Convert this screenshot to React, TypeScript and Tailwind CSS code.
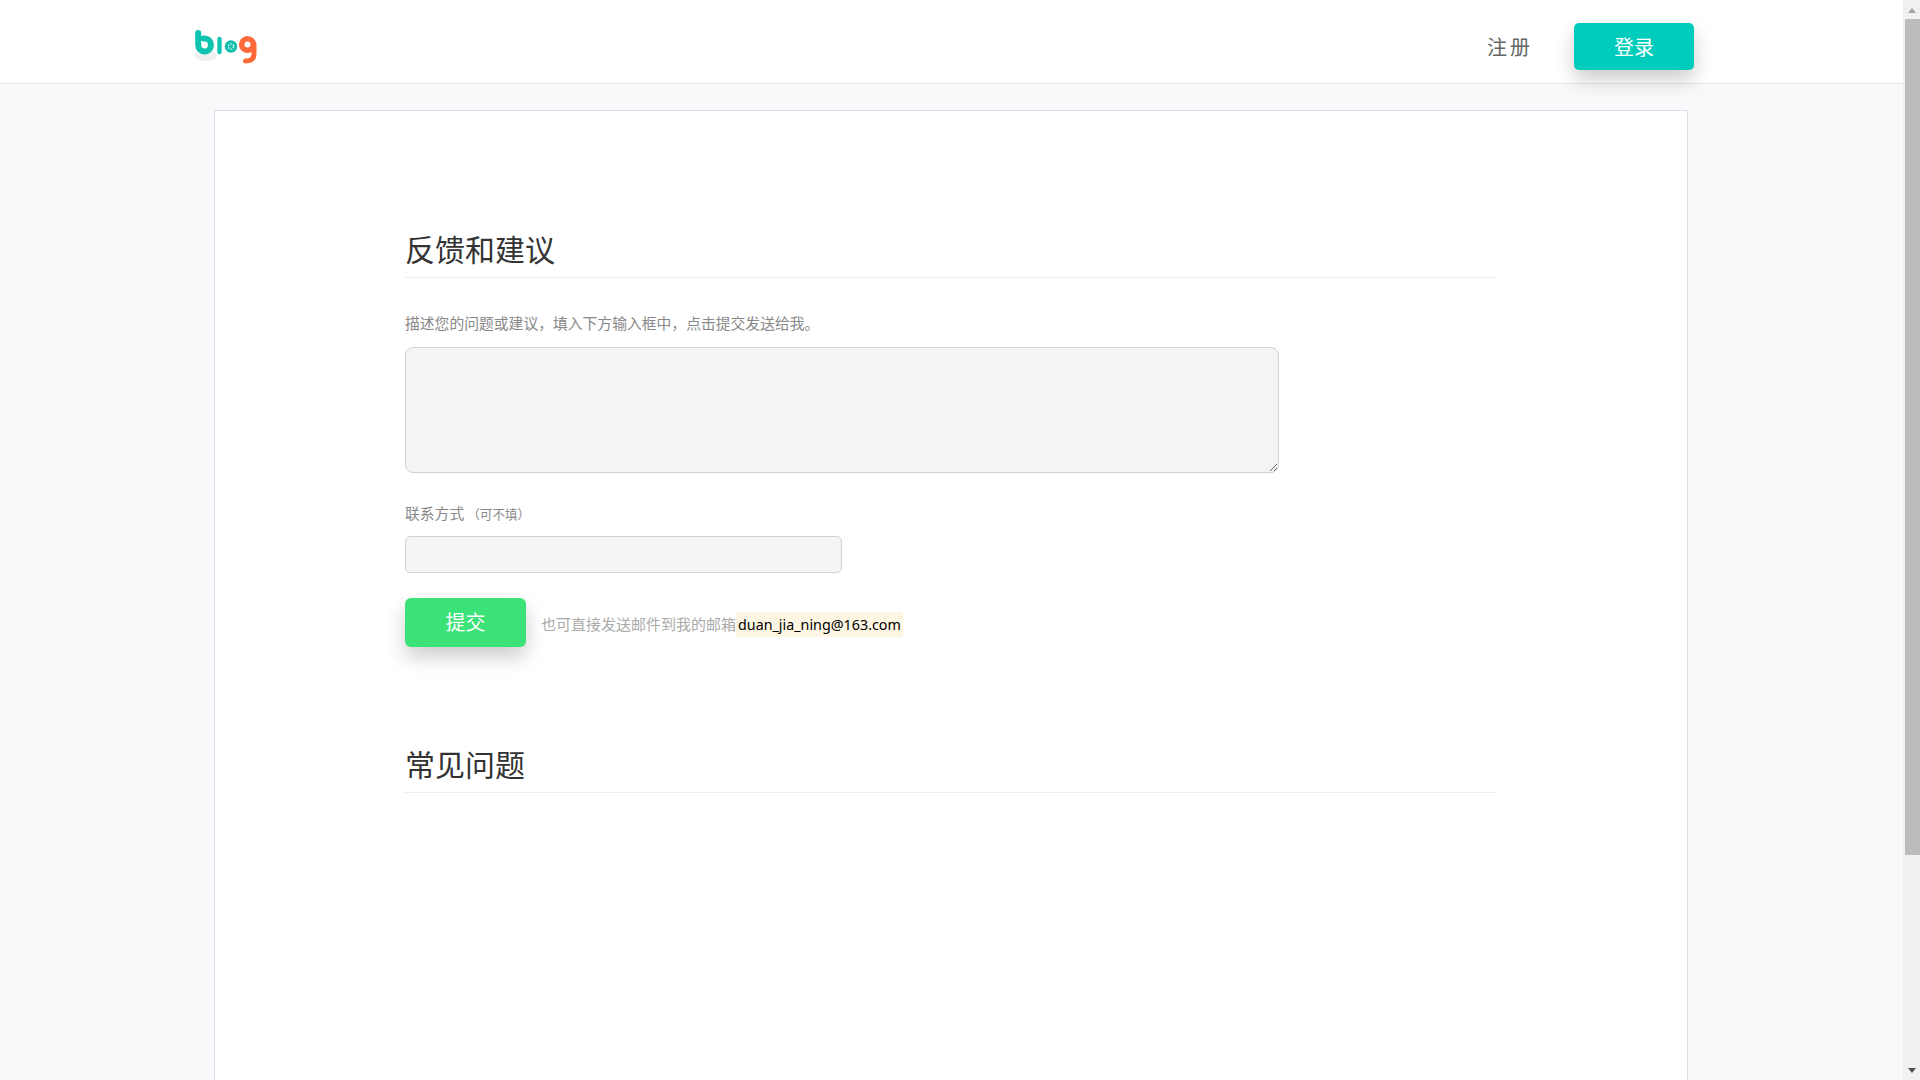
import React from 'react';

const cjk = "font-['Noto_Sans','Noto_Sans_CJK_SC',sans-serif]";

const Logo: React.FC = () => (
  <svg width="65" height="34" viewBox="0 0 65 34" fill="none">
    {/* soft shadow under the b */}
    <ellipse cx="11" cy="25" rx="11" ry="6" fill="#efefef" />
    {/* b */}
    <path d="M3.2 3 V15 A6.4 6.4 0 1 0 9.6 8.6 H8.5" stroke="#0fc4b0" strokeWidth="6" strokeLinecap="round" />
    {/* l */}
    <path d="M24.5 9 V22" stroke="#0fc4b0" strokeWidth="4.4" strokeLinecap="round" />
    {/* o */}
    <circle cx="36" cy="16.5" r="6.2" fill="#14bfae" />
    <circle cx="36" cy="16.5" r="2.6" fill="none" stroke="#d8f6f2" strokeWidth="1.3" strokeDasharray="1.6 1.2" />
    {/* g */}
    <circle cx="52.5" cy="14.5" r="5.8" stroke="#ff6a3a" strokeWidth="5.6" />
    <path d="M59 14 V24 Q59 31 50.5 31" stroke="#ff6a3a" strokeWidth="5" strokeLinecap="round" />
  </svg>
);

const Scrollbar: React.FC = () => (
  <div className="flex h-full w-[17px] shrink-0 flex-col items-center bg-[#f1f1f1]">
    <div className="flex h-[17px] w-full items-center justify-center pt-[3px]">
      <div className="h-0 w-0 border-x-[4.5px] border-b-[5px] border-x-transparent border-b-[#a3a3a3]" />
    </div>
    <div className="ml-[1px] mt-[2px] h-[836px] w-[15px] bg-[#bcbcbc]" />
    <div className="flex-1" />
    <div className="flex h-[17px] w-full items-center justify-center pb-[3px]">
      <div className="h-0 w-0 border-x-[4.5px] border-t-[5px] border-x-transparent border-t-[#505050]" />
    </div>
  </div>
);

const App: React.FC = () => {
  return (
    <div className={`flex h-screen w-full overflow-hidden bg-[#f8f9fb] ${cjk}`}>
      <div className="flex h-full min-w-0 flex-1 flex-col">
        {/* Header */}
        <header className="flex h-[84px] shrink-0 items-center justify-between border-b border-[#e6e6e6] bg-white pl-[195px] pr-[209px] pt-[10px]">
          <Logo />
          <div className="flex items-center gap-[41px]">
            <a className="pt-[2px] text-[20px] tracking-[3px] text-[#666666]">注册</a>
            <button className="h-[47px] w-[120px] rounded-[5px] bg-[#00ccbb] pt-[2px] text-[20px] text-white shadow-[0_10px_20px_rgba(0,0,0,0.2)]">
              登录
            </button>
          </div>
        </header>

        {/* Card */}
        <main className="ml-[214px] mt-[26px] w-[1474px] flex-1 border border-b-0 border-[#dde1e6] bg-white pl-[190px] pr-[190px] pt-[118px]">
          <section>
            <h2 className="h-[49px] border-b border-[#eeeeee] text-[30px] leading-[42px] text-[#333333]">反馈和建议</h2>
            <p className="mt-[34px] text-[14.8px] leading-[22px] text-[#888888]">描述您的问题或建议，填入下方输入框中，点击提交发送给我。</p>
            <textarea className="mt-[13px] block h-[126px] w-[874px] rounded-[8px] border border-[#d2d2d2] bg-[#f4f4f4] outline-none" />
            <p className="mt-[29px] text-[14.8px] leading-[22px] text-[#888888]">
              联系方式
              <span className="ml-[3px] text-[12.6px]">（可不填）</span>
            </p>
            <input className="mt-[10px] block h-[37px] w-[437px] rounded-[5px] border border-[#d2d2d2] bg-[#f4f4f4] outline-none" />
            <div className="mt-[25px] flex items-center">
              <button className="h-[49px] w-[121px] rounded-[6px] bg-[#3be277] text-[20px] text-white shadow-[0_10px_20px_rgba(0,0,0,0.2)]">
                提交
              </button>
              <span className="ml-[15px] mt-[3px] text-[15px] leading-[25px] text-[#aaaaaa]">也可直接发送邮件到我的邮箱</span>
              <span className="mt-[3px] bg-[#fdf6e3] px-[2px] text-[14.3px] leading-[25px] text-black">duan_jia_ning@163.com</span>
            </div>
          </section>
          <section className="mt-[97px]">
            <h2 className="h-[49px] border-b border-[#eeeeee] text-[30px] leading-[42px] text-[#333333]">常见问题</h2>
          </section>
        </main>
      </div>
      <Scrollbar />
    </div>
  );
};

export default App;
